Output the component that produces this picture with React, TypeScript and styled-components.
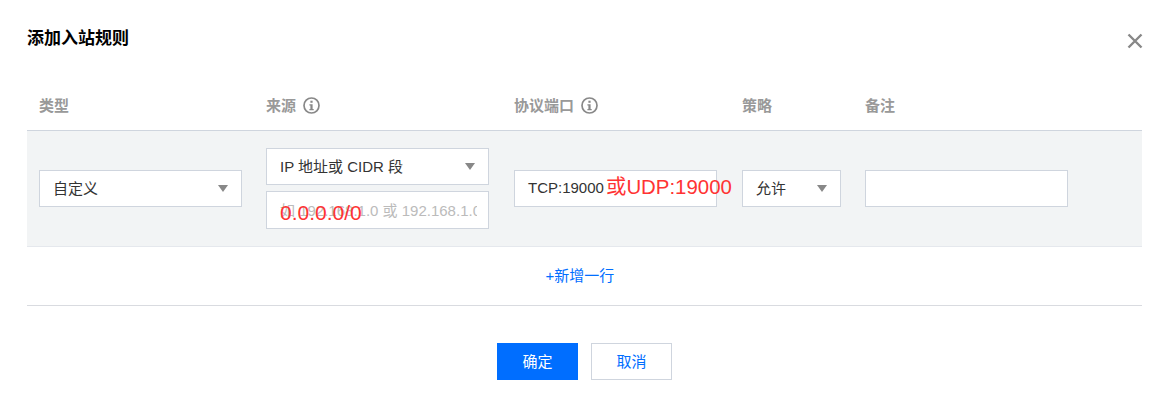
import React from "react";
import styled, { createGlobalStyle } from "styled-components";

const Global = createGlobalStyle`
  html, body { margin: 0; padding: 0; background: #fff; }
  body { font-family: "Liberation Sans", "Noto Sans CJK SC", sans-serif; font-size: 15px; color: #333; }
`;

const Dialog = styled.div`
  width: 1167px;
  height: 405px;
  box-sizing: border-box;
  padding: 0 25px 0 27px;
  position: relative;
  overflow: hidden;
`;
const Title = styled.h2`
  margin: 0;
  height: 80px;
  padding-top: 29px;
  box-sizing: border-box;
  font-size: 17px;
  line-height: 20px;
  font-weight: 700;
  color: #000;
`;
const Close = styled.button`
  position: absolute;
  left: 1125px;
  top: 31px;
  width: 20px;
  height: 20px;
  padding: 0;
  border: 0;
  background: none;
  display: flex;
`;
const Columns = styled.div`
  display: grid;
  grid-template-columns: 227px 248px 228px 123px 1fr;
  padding-left: 12px;
  align-items: center;
`;
const Head = styled(Columns)`
  height: 50px;
  border-bottom: 1px solid #cfd5de;
`;
const HeadCell = styled.div`
  display: flex;
  align-items: center;
  gap: 7px;
  color: #999;
  font-size: 15px;
  font-weight: 700;
  line-height: 20px;
  margin-top: 1px;
`;
const Row = styled(Columns)`
  height: 115px;
  background: #f2f4f5;
  border-bottom: 1px solid #e5e8ed;
`;
const Stack = styled.div`
  display: flex;
  flex-direction: column;
  gap: 6px;
`;
const Field = styled.div<{ $w: number; $h?: number }>`
  position: relative;
  box-sizing: border-box;
  width: ${(p) => p.$w}px;
  height: ${(p) => p.$h ?? 37}px;
  background: #fff;
  border: 1px solid #cfd5de;
  padding: 0 0 2px 13px;
  display: flex;
  align-items: center;
  justify-content: space-between;
  font-size: 15px;
  color: #333;
  white-space: nowrap;
`;
const Arrow = styled.span`
  width: 0;
  height: 0;
  margin: 2px 13px 0 0;
  border-left: 5px solid transparent;
  border-right: 5px solid transparent;
  border-top: 7px solid #888;
  flex: none;
`;
const Placeholder = styled.span`
  color: #bbb;
  display: block;
  overflow: hidden;
  width: 197px;
`;
const Red = styled.span`
  position: absolute;
  color: #ff3333;
  line-height: 24px;
  white-space: nowrap;
`;
const RedAddr = styled(Red)`
  left: 13px;
  top: 9px;
  font-size: 21px;
`;
const RedPort = styled(Red)`
  left: 91px;
  top: 4px;
  font-size: 20.4px;
`;
const AddRow = styled.div`
  height: 58px;
  border-bottom: 1px solid #d9dbe0;
  display: flex;
  align-items: center;
  justify-content: center;
  color: #006eff;
  font-size: 15px;
  padding: 0 9px 3px 0;
  box-sizing: content-box;
  height: 55px;
`;
const Footer = styled.div`
  display: flex;
  justify-content: center;
  gap: 13px;
  padding-top: 37px;
`;
const Button = styled.button<{ $primary?: boolean }>`
  box-sizing: border-box;
  width: 81px;
  height: 37px;
  font: inherit;
  font-size: 15px;
  padding: 0 0 3px;
  color: ${(p) => (p.$primary ? "#fff" : "#006eff")};
  background: ${(p) => (p.$primary ? "#006eff" : "#fff")};
  border: 1px solid ${(p) => (p.$primary ? "#006eff" : "#cfd5de")};
`;

const Info = () => (
  <svg width="17" height="17" viewBox="0 0 17 17" fill="none">
    <circle cx="8.5" cy="8.5" r="7.5" stroke="#888" strokeWidth="1.7" />
    <rect x="7.4" y="3.7" width="2.2" height="2.1" fill="#888" />
    <path d="M6.4 7.2h3.2v4.7h1.1v1.3H6.4v-1.3h1V8.5h-1z" fill="#888" />
  </svg>
);

export default function App() {
  return (
    <>
      <Global />
      <Dialog>
        <Title>添加入站规则</Title>
        <Close aria-label="关闭">
          <svg width="20" height="20" viewBox="0 0 20 20" fill="none">
            <path d="M3.5 3.5l13 13M16.5 3.5l-13 13" stroke="#888" strokeWidth="2.4" />
          </svg>
        </Close>
        <Head>
          <HeadCell>类型</HeadCell>
          <HeadCell>来源<Info /></HeadCell>
          <HeadCell>协议端口<Info /></HeadCell>
          <HeadCell>策略</HeadCell>
          <HeadCell>备注</HeadCell>
        </Head>
        <Row>
          <Field $w={203}>自定义<Arrow /></Field>
          <Stack>
            <Field $w={223}>IP 地址或 CIDR 段<Arrow /></Field>
            <Field $w={223} $h={38}>
              <Placeholder>如 192.168.1.0 或 192.168.1.0/24</Placeholder>
              <RedAddr>0.0.0.0/0</RedAddr>
            </Field>
          </Stack>
          <Field $w={203}>
            TCP:19000
            <RedPort>或UDP:19000</RedPort>
          </Field>
          <Field $w={99}>允许<Arrow /></Field>
          <Field $w={203} />
        </Row>
        <AddRow>+新增一行</AddRow>
        <Footer>
          <Button $primary>确定</Button>
          <Button>取消</Button>
        </Footer>
      </Dialog>
    </>
  );
}
